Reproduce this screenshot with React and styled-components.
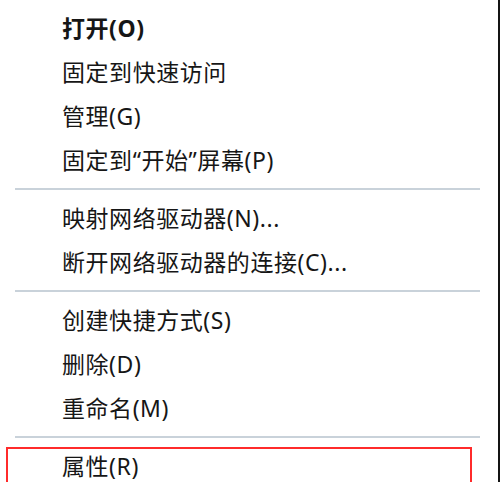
import React from "react";
import styled, { createGlobalStyle, css } from "styled-components";

const GlobalStyle = createGlobalStyle`
  html, body {
    margin: 0;
    padding: 0;
    background: #fff;
  }
`;

const Menu = styled.ul`
  list-style: none;
  margin: 0;
  padding: 6px 0 0;
  width: 500px;
  height: 482px;
  box-sizing: border-box;
  overflow: hidden;
  border-right: 2px solid #141414;
  background: #fff;
  font-family: "Noto Sans", "Noto Sans CJK SC", sans-serif;
  color: #161616;
`;

const Item = styled.li`
  position: relative;
  display: flex;
  align-items: center;
  height: 44px;
  padding-left: 62px;
  font-size: 23px;
  line-height: 1;
  letter-spacing: 0.55px;
  font-weight: ${(p) => (p.$bold ? 700 : 400)};
  white-space: nowrap;

  ${(p) =>
    p.$marked &&
    css`
      &::after {
        content: "";
        position: absolute;
        left: 6px;
        top: 3px;
        width: 466px;
        height: 50px;
        border: 2px solid #ff2b2b;
        box-sizing: border-box;
      }
    `}
`;

const Separator = styled.li`
  height: 2px;
  width: 465px;
  margin: 6px 0 6px 15px;
  background: #c9d2da;
`;

const groups = [
  [
    { label: "打开(O)", bold: true },
    { label: "固定到快速访问" },
    { label: "管理(G)" },
    { label: "固定到“开始”屏幕(P)" },
  ],
  [{ label: "映射网络驱动器(N)..." }, { label: "断开网络驱动器的连接(C)..." }],
  [{ label: "创建快捷方式(S)" }, { label: "删除(D)" }, { label: "重命名(M)" }],
  [{ label: "属性(R)", marked: true }],
];

export default function App() {
  return (
    <>
      <GlobalStyle />
      <Menu>
        {groups.map((group, gi) => (
          <React.Fragment key={gi}>
            {gi > 0 && <Separator />}
            {group.map((it) => (
              <Item key={it.label} $bold={it.bold} $marked={it.marked}>
                {it.label}
              </Item>
            ))}
          </React.Fragment>
        ))}
      </Menu>
    </>
  );
}
